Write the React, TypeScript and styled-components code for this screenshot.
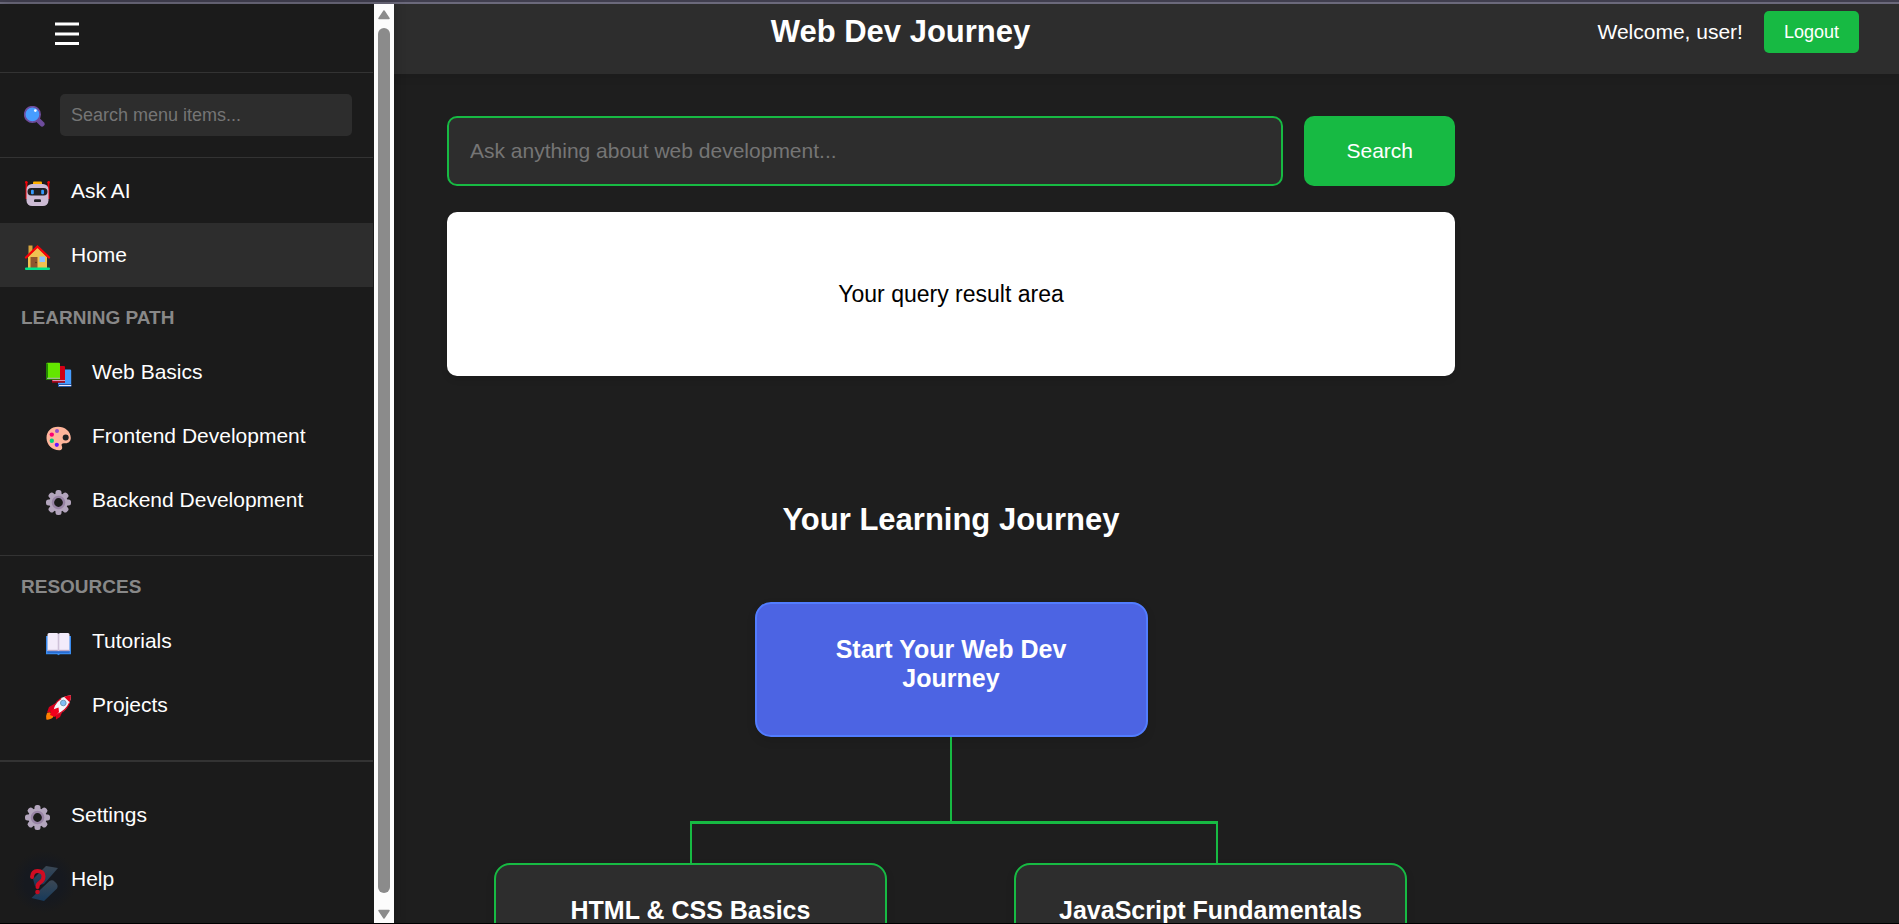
import React from "react";
import styled, { createGlobalStyle } from "styled-components";

const color = {
  page: "#1e1e1e",
  side: "#1b1b1b",
  panel: "#2d2d2d",
  rule: "#333333",
  green: "#17ba43",
  blue: "#4c64e3",
  blueEdge: "#527dff",
  muted: "#888888",
  hint: "#757575",
  text: "#ffffff",
};

const GlobalStyle = createGlobalStyle`
  *, *::before, *::after { box-sizing: border-box; }
  body {
    margin: 0;
    background: ${color.page};
    color: ${color.text};
    font-family: "Liberation Sans", Arial, sans-serif;
    font-size: 21px;
    line-height: 24px;
  }
  h1, h2, h3, p, ul { margin: 0; padding: 0; }
  ul { list-style: none; }
  button, input { font-family: inherit; }
`;

const Shell = styled.div`
  display: flex;
  flex-direction: column;
  height: 100vh;
  overflow: hidden;
  border-bottom: 1px solid #000000;
`;

const TopEdge = styled.div`
  flex: none;
  height: 4px;
  background: #403e4e;
  border-bottom: 2px solid #6b697b;
`;

const Body = styled.div`
  display: flex;
  flex: 1;
  min-height: 0;
`;

const Sidebar = styled.aside`
  display: flex;
  flex: none;
  width: 394px;
  background: ${color.side};
  box-shadow: 2px 0 10px rgba(0, 0, 0, 0.2);
  z-index: 1;
`;

const SidebarContent = styled.div`
  flex: 1;
  margin-right: 1px;
  overflow: hidden;
`;

const MenuBar = styled.div`
  height: 69px;
  padding: 12px 50px;
  border-bottom: 1px solid ${color.rule};
`;

const MenuButton = styled.button`
  display: flex;
  padding: 5px;
  border: 0;
  background: none;
  cursor: pointer;
`;

const MenuSearch = styled.label`
  display: flex;
  align-items: center;
  gap: 15px;
  height: 85px;
  padding: 0 21px 0 24px;
  border-bottom: 1px solid ${color.rule};

  svg {
    margin-top: 3px;
  }
`;

const MenuInput = styled.input`
  flex: 1;
  min-width: 0;
  height: 42px;
  padding: 0 11px;
  border: 0;
  border-radius: 5px;
  background: ${color.panel};
  color: ${color.text};
  font-size: 18px;

  &::placeholder {
    color: ${color.hint};
  }
`;

const Menu = styled.nav`
  padding-top: 1px;
`;

const Section = styled.section<{ $edge?: number }>`
  padding-bottom: 23px;
  border-bottom: ${(p) => p.$edge ?? 1}px solid ${color.rule};
`;

const SectionTitle = styled.h2`
  height: 53px;
  padding: 20px 21px 0;
  color: ${color.muted};
  font-size: 19px;
  line-height: 22px;
`;

const Footer = styled.div`
  padding-top: 21px;
`;

const NavLink = styled.a<{ $nested?: boolean; $active?: boolean }>`
  display: flex;
  align-items: center;
  gap: 21px;
  height: 64px;
  padding-left: ${(p) => (p.$nested ? 46 : 25)}px;
  background: ${(p) => (p.$active ? color.panel : "transparent")};
  color: ${color.text};
  text-decoration: none;

  svg {
    flex: none;
    margin-top: 4px;
    overflow: visible;
  }
`;

const ScrollTrack = styled.div`
  display: flex;
  flex-direction: column;
  align-items: center;
  gap: 8px;
  width: 20px;
  padding: 6px 0 4px;
  background: #fcfcfc;

  svg {
    flex: none;
  }
`;

const ScrollThumb = styled.div`
  flex: 1;
  width: 12px;
  margin-bottom: 8px;
  border-radius: 6px;
  background: #8b8b8b;
`;

const Main = styled.div`
  flex: 1;
  min-width: 0;
  overflow: hidden;
`;

const Header = styled.header`
  display: grid;
  grid-template-columns: 5fr auto 11fr;
  height: 70px;
  padding: 7px 40px 21px 0;
  background: ${color.panel};
  box-shadow: 0 2px 10px rgba(0, 0, 0, 0.1);
`;

const Title = styled.h1`
  grid-column: 2;
  align-self: center;
  font-size: 31px;
  line-height: 36px;
`;

const Account = styled.div`
  display: flex;
  align-items: center;
  justify-content: flex-end;
  gap: 21px;
`;

const Button = styled.button<{ $large?: boolean }>`
  height: ${(p) => (p.$large ? 70 : 42)}px;
  padding: 0 ${(p) => (p.$large ? 42 : 20)}px;
  border: 0;
  border-radius: ${(p) => (p.$large ? 10 : 5)}px;
  background: ${color.green};
  color: ${color.text};
  font-size: ${(p) => (p.$large ? 21 : 18)}px;
  cursor: pointer;
`;

const Content = styled.main`
  max-width: 1114px;
  padding: 42px 53px;
`;

const AskForm = styled.form`
  display: flex;
  gap: 21px;
`;

const AskInput = styled.input`
  flex: 1;
  min-width: 0;
  height: 70px;
  padding: 0 21px;
  border: 2px solid ${color.green};
  border-radius: 10px;
  background: ${color.panel};
  color: ${color.text};
  font-size: 21px;

  &::placeholder {
    color: ${color.hint};
  }
`;

const Result = styled.section`
  display: flex;
  align-items: center;
  justify-content: center;
  min-height: 164px;
  margin-top: 26px;
  border-radius: 10px;
  background: #ffffff;
  color: #000000;
  font-size: 23px;
  box-shadow: 0 4px 6px rgba(0, 0, 0, 0.1);
`;

const Journey = styled.section`
  display: flex;
  flex-direction: column;
  align-items: center;
  margin-top: 126px;
  padding: 0 47px;
`;

const JourneyTitle = styled.h2`
  margin-bottom: 64px;
  font-size: 31px;
  line-height: 36px;
`;

const Node = styled.article<{ $start?: boolean }>`
  width: 100%;
  max-width: 393px;
  min-height: 135px;
  padding: 31px 42px;
  border: 2px solid ${(p) => (p.$start ? color.blueEdge : color.green)};
  border-radius: 16px;
  background: ${(p) => (p.$start ? color.blue : color.panel)};
  text-align: center;
  box-shadow: 0 4px 10px rgba(0, 0, 0, 0.1);
`;

const NodeTitle = styled.h3<{ $wide?: boolean }>`
  font-size: 25px;
  line-height: 29px;
  white-space: ${(p) => (p.$wide ? "nowrap" : "normal")};
`;

const Stem = styled.div`
  width: 2px;
  height: 84px;
  background: ${color.green};
`;

const Rail = styled.div`
  align-self: flex-start;
  width: 528px;
  height: 42px;
  margin-left: 196px;
  border: solid ${color.green};
  border-width: 3px 2px 0;
`;

const Branches = styled.div`
  display: grid;
  grid-template-columns: 1fr 1fr;
  gap: 126px;
  width: 100%;
`;

const Icon = ({ size = 25, children }: { size?: number; children: React.ReactNode }) => (
  <svg width={size} height={size} viewBox="0 0 25 25" aria-hidden="true">
    {children}
  </svg>
);

const Magnifier = () => (
  <Icon size={21}>
    <path d="M16 16l5.5 5.500" stroke="#6e4c9c" strokeWidth="6" strokeLinecap="round" />
    <circle cx="10" cy="10" r="9.200" fill="#479dff" stroke="#6e4c9c" strokeWidth="2" />
    <circle cx="13.500" cy="5.500" r="1.600" fill="#fff" />
  </Icon>
);

const Robot = () => (
  <Icon>
    <path d="M1.500 1v17M23.500 1v17" stroke="#f00008" strokeWidth="1.800" />
    <circle cx="1.300" cy="1.200" r="1.300" fill="#f00008" />
    <circle cx="23.700" cy="1.200" r="1.300" fill="#f00008" />
    <rect x="8" y=".5" width="9" height="5" rx="1" fill="#ffb000" />
    <rect x="1.500" y="3" width="22" height="22" rx="5.500" fill="#cdbcd5" />
    <rect x="2.500" y="7" width="20" height="7.500" rx="3.700" fill="#202124" />
    <rect x="6" y="8.800" width="2.800" height="4.400" rx="1" fill="#359bff" />
    <rect x="16.200" y="8.800" width="2.800" height="4.400" rx="1" fill="#359bff" />
    <rect x="9" y="18.300" width="7" height="2.800" rx="1.200" fill="#202124" />
  </Icon>
);

const House = () => (
  <Icon>
    <path d="M3.500 .5h4v10h-4z" fill="#d6a43d" />
    <path d="M3 12L12.500 2 22 12v11.500H3z" fill="#efc151" />
    <path d="M1 12.500L12.500 1.500 24 12.500" fill="none" stroke="#fa0008" strokeWidth="2.300" strokeLinecap="round" />
    <path d="M5.500 12h7v11h-7z" fill="#8e562e" />
    <circle cx="11" cy="17.500" r=".8" fill="#4f2c1c" />
    <path d="M14.500 11.500h5.500v5.500h-5.500z" fill="#8dc3ff" />
    <rect x="0" y="22.500" width="25" height="2.500" rx="1" fill="#00e58a" />
  </Icon>
);

const Books = () => (
  <Icon>
    <path d="M12 7.500h12q1.200 0 1.200 1.200V24.600H12z" fill="#479dff" />
    <path d="M12 22h13.200v2.800H12z" fill="#2459ad" />
    <path d="M13 23.500h12.200" stroke="#f1eafa" strokeWidth="1" />
    <path d="M6 4h12q1 0 1 1v15.500H6z" fill="#d30015" />
    <path d="M6.500 18.700h12.500" stroke="#d7b8df" strokeWidth="1" />
    <path d="M6 20h13" stroke="#8b0015" strokeWidth="1.200" />
    <path d="M1 .8h12q1 0 1 1V17H0V2z" fill="#63e600" />
    <path d="M0 1.500h2V17H0z" fill="#238900" />
    <path d="M1 16.300h13" stroke="#c4b2d3" strokeWidth="1" />
    <path d="M0 17.400h14" stroke="#238900" strokeWidth="1" />
  </Icon>
);

const Palette = () => (
  <Icon>
    <path
      d="M12 .8C5 .8.5 5.500.5 12c0 7 6 12.300 12.500 12.300 3 0 3.800-2 2.800-4.300-.9-2.200.7-3 3-2.700 3.500.4 6-1.800 6-5.200C24.800 5.500 19 .8 12 .8z"
      fill="#ffb59b"
    />
    <circle cx="19.700" cy="11.500" r="3" fill="#202124" />
    <circle cx="11" cy="5" r="2" fill="#9450cc" />
    <circle cx="5.800" cy="8.600" r="2.200" fill="#fb0074" />
    <circle cx="5.800" cy="14.800" r="2.200" fill="#00d67c" />
    <circle cx="10.800" cy="18.800" r="2.100" fill="#6514ff" />
  </Icon>
);

const Gear = () => (
  <Icon>
    {[0, 45, 90, 135].map((angle) => (
      <rect
        key={angle}
        x="9.500"
        y="0"
        width="6"
        height="25"
        rx="2.500"
        fill="#b3a5bd"
        transform={`rotate(${angle} 12.5 12.5)`}
      />
    ))}
    <circle cx="12.500" cy="12.500" r="9.300" fill="#b3a5bd" />
    <circle cx="12.500" cy="12.500" r="5.600" fill={color.side} stroke="#9884a5" strokeWidth="2.400" />
  </Icon>
);

const OpenBook = () => (
  <Icon>
    <path d="M0 5h25v18.300H14l-1.500 1-1.500-1H0z" fill="#398bef" />
    <path d="M1.500 20h22v2h-22z" fill="#276bd2" />
    <path d="M3 2h8l1.500.8L14 2h8q1.500 0 1.500 1.500V20H1.500V3.500Q1.500 2 3 2z" fill="#f3ebfa" />
    <path d="M1.500 19.500h22" stroke="#b8a7c6" strokeWidth="1.400" />
    <path d="M12.500 3v17" stroke="#cfc1d9" strokeWidth="1.600" />
  </Icon>
);

const Rocket = () => (
  <Icon>
    <path d="M1 18q3-2 5.500.8T5.500 23.500Q3 25 .3 24.500-.2 20 1 18z" fill="#ff8000" />
    <path d="M9 8.500L3 12l-2 5.500 8-1zM17 15.500L14 22l-4 2.500-.5-8.500z" fill="#d8001c" />
    <path d="M7 18C7 9 13 1.500 25 .3 24.500 12 17 18.500 9 20z" fill="#f5f3f8" />
    <path d="M18 1.800Q21.500.5 25 .3q0 3.500-1.300 7z" fill="#e0001b" />
    <path d="M6.500 19.500Q6.500 9 15 3.500" fill="none" stroke="#d8001c" strokeWidth="1.200" />
    <path d="M23.500 8Q20 16 11 19.500" fill="none" stroke="#d8001c" strokeWidth="1.200" />
    <path d="M12.500 12.500L5.500 15l-1.500 5 5 2 4-5z" fill="#f0001c" />
    <circle cx="17.300" cy="8" r="2.800" fill="#82bdf5" stroke="#6c9ab9" strokeWidth="1" />
  </Icon>
);

const HelpMark = () => (
  <Icon>
    <defs>
      <linearGradient id="ribbon" x1="0" y1="0" x2="0" y2="1">
        <stop offset="0" stopColor="#3b4754" />
        <stop offset="1" stopColor="#173a5b" />
      </linearGradient>
      <radialGradient id="halo">
        <stop offset="0.6" stopColor="#16191f" />
        <stop offset="1" stopColor="#16191f" stopOpacity="0" />
      </radialGradient>
    </defs>
    <rect x="-13" y="-18" width="64" height="62" rx="14" fill="url(#halo)" />
    <path d="M21-3l12 2-14 16-9 2-2-7z" fill="url(#ribbon)" />
    <path d="M6.500 29l18-17q3-1.500 5 .5 4.500 3.500 2.500 7L19 32z" fill="url(#ribbon)" />
    <path
      d="M7 8Q7.500 2 12.500 2q6 0 6 5.500 0 4-3.500 6-2.500 1.500-2.500 4.500"
      fill="none"
      stroke="#d00c22"
      strokeWidth="4"
      strokeLinecap="round"
    />
    <circle cx="12.500" cy="23" r="2.300" fill="#c20b20" />
  </Icon>
);

const learning = [
  { label: "Web Basics", icon: <Books /> },
  { label: "Frontend Development", icon: <Palette /> },
  { label: "Backend Development", icon: <Gear /> },
];

const resources = [
  { label: "Tutorials", icon: <OpenBook /> },
  { label: "Projects", icon: <Rocket /> },
];

const NavList = ({
  items,
  nested,
}: {
  items: { label: string; icon: React.ReactNode; active?: boolean }[];
  nested?: boolean;
}) => (
  <ul>
    {items.map((item) => (
      <li key={item.label}>
        <NavLink href="#" $nested={nested} $active={item.active}>
          {item.icon}
          {item.label}
        </NavLink>
      </li>
    ))}
  </ul>
);

export default function App() {
  return (
    <>
      <GlobalStyle />
      <Shell>
        <TopEdge />
        <Body>
          <Sidebar>
            <SidebarContent>
              <MenuBar>
                <MenuButton type="button" aria-label="Toggle menu">
                  <svg width="24" height="26" viewBox="0 0 24 26" aria-hidden="true">
                    <path d="M0 3h24M0 13h24M0 22.500h24" stroke="#fff" strokeWidth="3" />
                  </svg>
                </MenuButton>
              </MenuBar>
              <MenuSearch>
                <Magnifier />
                <MenuInput type="text" aria-label="Search menu items" placeholder="Search menu items..." />
              </MenuSearch>
              <Menu aria-label="Main menu">
                <NavList
                  items={[
                    { label: "Ask AI", icon: <Robot /> },
                    { label: "Home", icon: <House />, active: true },
                  ]}
                />
                <Section>
                  <SectionTitle>LEARNING PATH</SectionTitle>
                  <NavList items={learning} nested />
                </Section>
                <Section $edge={2}>
                  <SectionTitle>RESOURCES</SectionTitle>
                  <NavList items={resources} nested />
                </Section>
                <Footer>
                  <NavList
                    items={[
                      { label: "Settings", icon: <Gear /> },
                      { label: "Help", icon: <HelpMark /> },
                    ]}
                  />
                </Footer>
              </Menu>
            </SidebarContent>
            <ScrollTrack aria-hidden="true">
              <svg width="12" height="10" viewBox="0 0 12 10">
                <path d="M6 1l5 7.500H1z" fill="#8b8b8b" stroke="#8b8b8b" strokeWidth="1.500" strokeLinejoin="round" />
              </svg>
              <ScrollThumb />
              <svg width="12" height="10" viewBox="0 0 12 10">
                <path d="M6 9l5-7.500H1z" fill="#8b8b8b" stroke="#8b8b8b" strokeWidth="1.500" strokeLinejoin="round" />
              </svg>
            </ScrollTrack>
          </Sidebar>
          <Main>
            <Header>
              <Title>Web Dev Journey</Title>
              <Account>
                <span>Welcome, user!</span>
                <Button type="button">Logout</Button>
              </Account>
            </Header>
            <Content>
              <AskForm onSubmit={(e) => e.preventDefault()}>
                <AskInput
                  type="text"
                  aria-label="Ask anything about web development"
                  placeholder="Ask anything about web development..."
                />
                <Button type="submit" $large>
                  Search
                </Button>
              </AskForm>
              <Result>
                <p>Your query result area</p>
              </Result>
              <Journey>
                <JourneyTitle>Your Learning Journey</JourneyTitle>
                <Node $start>
                  <NodeTitle>Start Your Web Dev Journey</NodeTitle>
                </Node>
                <Stem />
                <Rail />
                <Branches>
                  <Node>
                    <NodeTitle>HTML &amp; CSS Basics</NodeTitle>
                  </Node>
                  <Node>
                    <NodeTitle $wide>JavaScript Fundamentals</NodeTitle>
                  </Node>
                </Branches>
              </Journey>
            </Content>
          </Main>
        </Body>
      </Shell>
    </>
  );
}
